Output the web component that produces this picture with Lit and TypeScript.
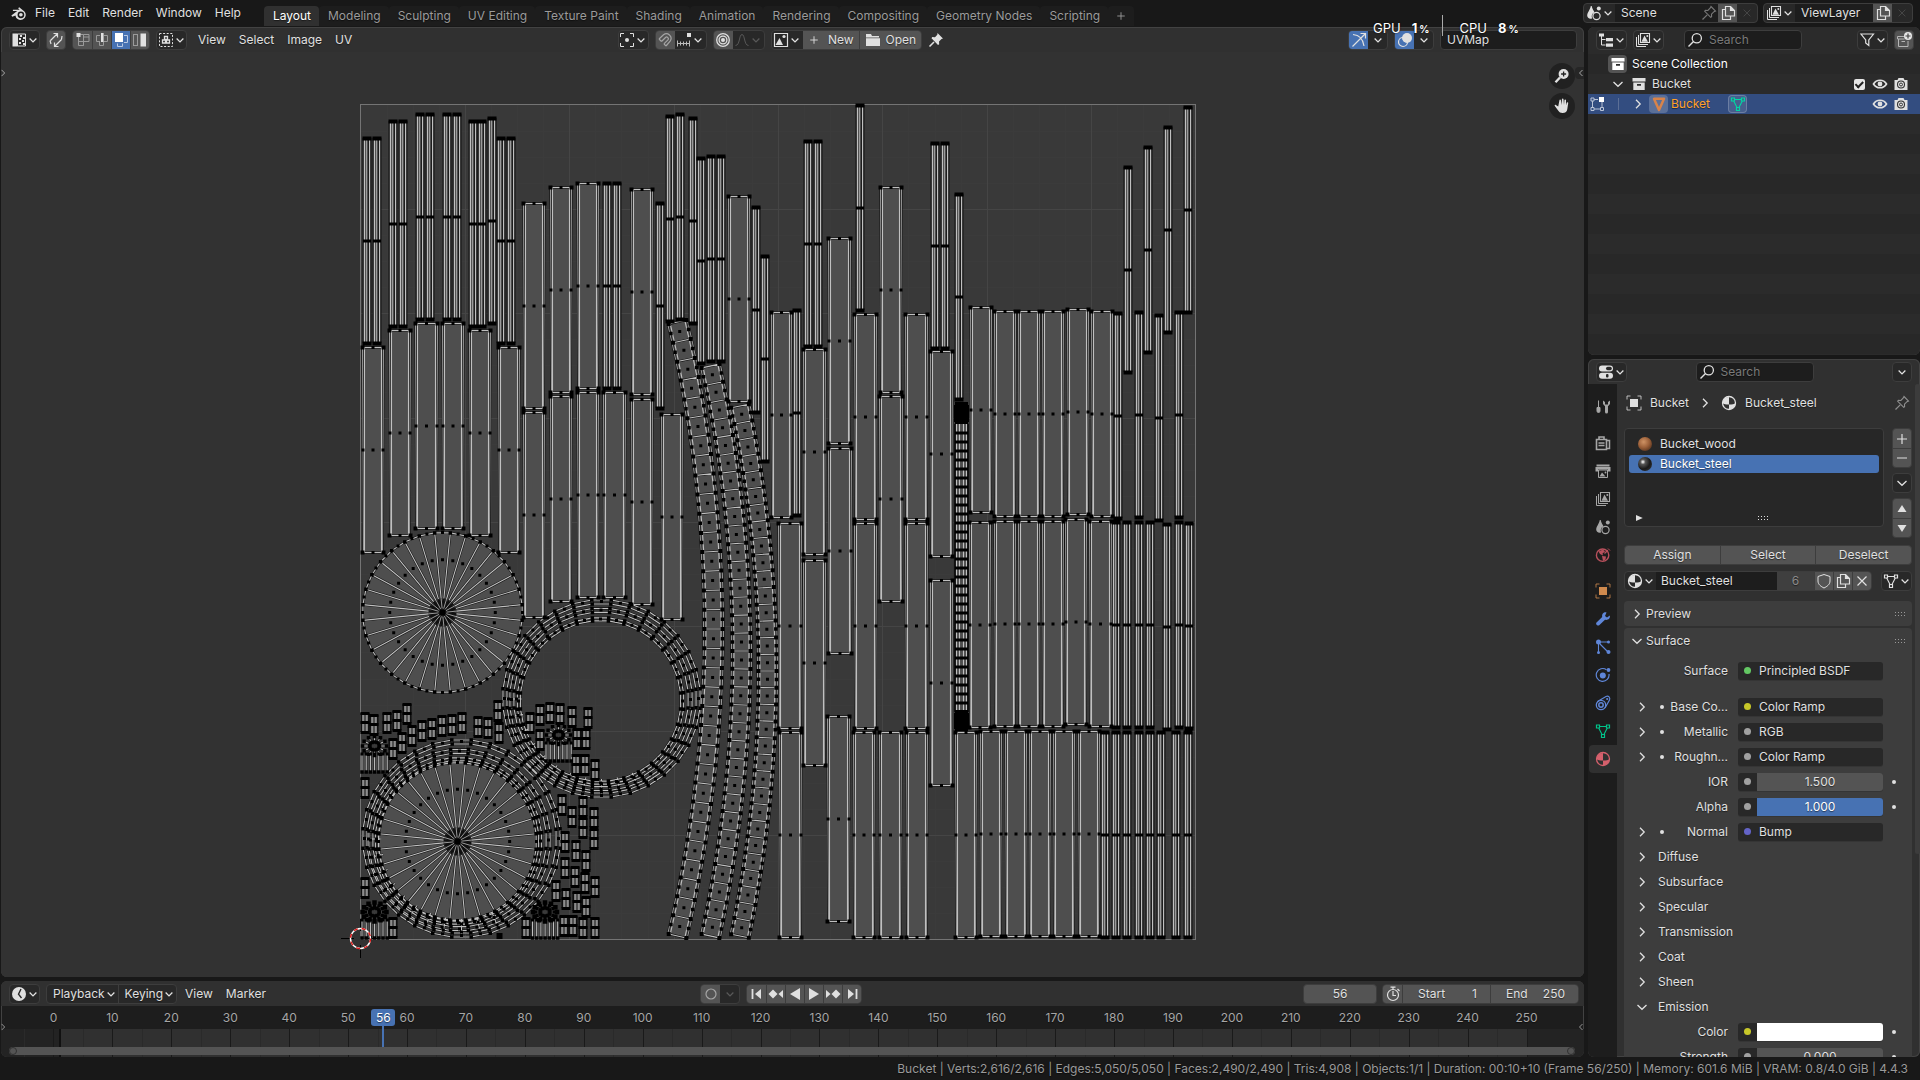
import { LitElement, html, svg, css, nothing } from "lit";
import { customElement, property } from "lit/decorators.js";

/* ---------- icons, drawn on a 16 x 16 grid ---------- */

const ICONS: Record<string, unknown> = {
  blender: svg`<path d="M1.2 10.2 6.4 6.2H2.6V5h6L7.2 3.8l1-.9 4.6 3.7a4.6 4.6 0 1 1-8 3.6L2 11.4z" fill="currentColor"/><circle cx="9.7" cy="9.6" r="3" fill="#181818"/><circle cx="9.7" cy="9.6" r="1.6" fill="currentColor"/>`,
  chevD: svg`<path d="M3.5 6 8 10.5 12.5 6" fill="none" stroke="currentColor" stroke-width="1.7"/>`,
  chevR: svg`<path d="M6 3.8 10.2 8 6 12.2" fill="none" stroke="currentColor" stroke-width="1.3"/>`,
  chevDw: svg`<path d="M3.5 6 8 10.3 12.5 6" fill="none" stroke="currentColor" stroke-width="1.3"/>`,
  chevL: svg`<path d="M10 4 6 8l4 4" fill="none" stroke="currentColor" stroke-width="1.3"/>`,
  uvedit: svg`<path d="M1.5 1.5h5v13h-5z" fill="currentColor"/><path d="M6.5 2h8v12h-8z" fill="none" stroke="currentColor"/><path d="M9 3h2v2H9zM12 5h2v2h-2zM8 6h2v2H8zM11 8h2v2h-2zM8 10h2v2H8z M12 11h2v2h-2z" fill="currentColor"/>`,
  sync: svg`<path d="M2.5 8.5 9 2M5.5 1.5h4v4M13.5 7.5 7 14M10.5 14.5h-4v-4M3 12l-1-3.5M14 4l-.5 3.5" fill="none" stroke="currentColor" stroke-width="1.2"/>`,
  vert: svg`<path d="M3.5 5v8.5h5V5H14v4.5H3.5M8.5 5V2.5H4.5M8.5 9.5v4M14 5V2.5H8.5" fill="none" stroke="#9a9a9a"/><rect x="1.5" y="1" width="4" height="4" fill="currentColor"/>`,
  edge: svg`<path d="M6 3.5H2.5v6H6M10 3.5h3.5v6H10M5.5 9.5v4h4v-4" fill="none" stroke="#9a9a9a"/><rect x="7" y="1" width="2.6" height="9" fill="currentColor"/>`,
  face: svg`<path d="M11 3.5h3.5v7H11M4.5 11.5v3h5v-3" fill="none" stroke="#b9c9e4"/><rect x="2" y="1" width="8" height="9" fill="#fff"/>`,
  island: svg`<rect x="1.5" y="2.5" width="4" height="11" fill="none" stroke="#9a9a9a"/><rect x="8.5" y="1.5" width="5.5" height="13" fill="currentColor"/>`,
  sticky: svg`<rect x="1.5" y="1.5" width="13" height="13" fill="none" stroke="currentColor" stroke-dasharray="2 1.6"/><path d="M6.5 4.5h3v3h-3zM4.5 8h3v3h-3zM8.5 8h3v3h-3z" fill="none" stroke="currentColor" stroke-width="1.3"/>`,
  pivot: svg`<path d="M1.5 5V1.5H5M11 1.5h3.5V5M14.5 11v3.5H11M5 14.5H1.5V11" fill="none" stroke="currentColor"/><circle cx="8" cy="8" r="2" fill="currentColor"/>`,
  magnet: svg`<path d="m2 7 4.5-4.2a4.6 4.6 0 0 1 6.8 6L9 14M4.5 9.5l4-4a1.7 1.7 0 0 1 2.4 2.4l-4 4M2 7l2.5 2.5M6.9 11.9 9 14" fill="none" stroke="#a5a5a5" stroke-width="1.2"/>`,
  increment: svg`<path d="M1 11.5h12.5M1.5 8.5v6M4.5 9.5v4M7.5 9.5v4M10.5 9.5v4M13.5 8.5v6" fill="none" stroke="#bbb"/><rect x="11" y="1" width="4" height="4" fill="currentColor"/>`,
  prop: svg`<circle cx="8" cy="8" r="6.3" fill="none" stroke="currentColor" stroke-width="1.3"/><circle cx="8" cy="8" r="3.9" fill="none" stroke="currentColor" stroke-width="1.3"/><circle cx="8" cy="8" r="2" fill="currentColor"/>`,
  falloff: svg`<path d="M1.5 13.5C6 13.5 5 2.5 8 2.5s2 11 6.5 11" fill="none" stroke="currentColor"/>`,
  image: svg`<path d="M5 1.5H1.5v13H5M1.5 14.5h13v-13H9" fill="none" stroke="currentColor" stroke-width="1.2"/><path d="m2.5 13 4-7 3.5 7z" fill="currentColor"/><circle cx="11" cy="4.5" r="1.6" fill="currentColor"/><path d="M4 1.5h6" stroke="currentColor"/>`,
  plus: svg`<path d="M8 3v10M3 8h10" stroke="currentColor" stroke-width="1.2"/>`,
  minus: svg`<path d="M3 8h10" stroke="currentColor" stroke-width="1.2"/>`,
  folder: svg`<path d="M1 2h5l1 2h7v1.5H1zM1 6.3h14V14H1z" fill="currentColor"/>`,
  pin: svg`<path d="m9.5 1 5.5 5.5-1.5.5-2.5 2.5.2 2.8-1.2.7L3.5 6.3l.7-1.2 2.8.2L9.3 2.8z" fill="currentColor"/><path d="M6 10 1.5 14.5" stroke="currentColor" stroke-width="1.6"/>`,
  pinOutline: svg`<path d="m10 1.5 4.5 4.5-1.5.7-2.5 2.5.1 2.5-.9.6-6-6 .7-.9 2.5.1L9.3 3z" fill="none" stroke="currentColor" stroke-width="1.1"/><path d="M6.2 9.8 1.5 14.5" stroke="currentColor" stroke-width="1.2"/>`,
  gizmo: svg`<path d="M2 2.5c7 .5 10 4 11 11.5M1.5 14.5 14 2M9.5 1.5h5v5" fill="none" stroke="currentColor" stroke-width="1.2"/>`,
  overlay: svg`<circle cx="10" cy="6" r="5" fill="currentColor"/><circle cx="6" cy="10" r="4.5" fill="none" stroke="currentColor" stroke-width="1.2"/><path d="M5 8.5a4 4 0 0 0 3 3" stroke="#4772b3" fill="none" stroke-width="1.3"/>`,
  zoom: svg`<circle cx="9.6" cy="6" r="5" fill="currentColor"/><path d="m6 9.5-4.5 4.8" stroke="currentColor" stroke-width="2.4"/><path d="M9.6 3.5v5M7.1 6h5" stroke="#222" stroke-width="1.3"/>`,
  hand: svg`<path d="M4.2 8.5 1.8 7c-.8-.5-1.5.4-1 1l3.7 5c.8 1.3 2 2 4 2 3 0 4.7-1.5 4.9-4.5l.8-5.5c.2-1-1.2-1.2-1.5-.3L12 7.5V2.3c0-1-1.5-1-1.6 0L10 7 9.5 1.3c-.1-1-1.5-1-1.6 0L7.8 7 6.9 2.2c-.2-1-1.6-.8-1.5.2z" fill="currentColor"/>`,
  scene: svg`<path d="M4.8 1C4 5 1.2 7.5 1.2 10.5c0 2 1.5 3.2 3.4 3.2l1.6-.3C5 10.5 6.5 8 8.5 7.5 7.8 5.5 6.2 4 5.7 1z" fill="currentColor"/><circle cx="10.5" cy="11" r="3.6" fill="none" stroke="currentColor" stroke-width="1.2"/><circle cx="12.8" cy="3.5" r="2" fill="currentColor"/>`,
  copy: svg`<path d="M5.5 1.5h5l4 4v5.5h-9zM10.5 1.5v4h4" fill="none" stroke="currentColor" stroke-width="1.2"/><path d="M5.5 4.5h-3v10h8v-3.5" fill="none" stroke="currentColor" stroke-width="1.2"/><path d="M10 1.5h1l3.5 4H10z" fill="currentColor"/>`,
  close: svg`<path d="m3.5 3.5 9 9m0-9-9 9" stroke="currentColor" stroke-width="1.2"/>`,
  viewlayer: svg`<path d="M1.5 5v9.5H11M3.5 3v9.5H13" fill="none" stroke="currentColor"/><path d="M5.5 1.5h9v9h-9z" fill="none" stroke="currentColor" stroke-width="1.1"/><path d="m6.5 9.8 3-6.3 3.5 6.3z" fill="currentColor"/><circle cx="12.3" cy="4" r="1" fill="currentColor"/>`,
  outliner: svg`<path d="M1 1.5h5v3H1zM8 6h7v3.2H8zM8 11.5h7v3.2H8z" fill="currentColor"/><path d="M3.5 4v9h4M3.5 7.5h4" fill="none" stroke="currentColor"/>`,
  search: svg`<circle cx="9.8" cy="6.2" r="4.6" fill="none" stroke="currentColor" stroke-width="1.3"/><path d="M6.5 9.5 1.5 14.5" stroke="currentColor" stroke-width="1.5"/>`,
  filter: svg`<path d="M2 2h12.5L9.8 8v5.5L6.7 11V8z" fill="none" stroke="currentColor" stroke-width="1.2"/>`,
  newcoll: svg`<path d="M1.5 4.5h8M2.5 7v7.5h9.5V9M1.5 4.5V7h7M5.5 9.5h3.5" fill="none" stroke="#b5b5b5"/><circle cx="12" cy="4" r="4" fill="#e6e6e6"/><path d="M12 1.5v5M9.5 4h5" stroke="#444" stroke-width="1.2"/>`,
  collection: svg`<path d="M1.5 2h13v3.5h-13zM2.3 6.5h11.4V14H2.3z" fill="currentColor"/><path d="M6 8h4v1.8H6z" fill="#2b2b2b"/>`,
  eye: svg`<path d="M1.5 8C4.5 3 11.5 3 14.5 8c-3 5-10 5-13 0z" fill="none" stroke="currentColor" stroke-width="1.7"/><circle cx="8" cy="8" r="2.4" fill="currentColor"/>`,
  camera: svg`<path d="M1.5 4h3l1-2h5l1 2h3v10h-13z" fill="currentColor"/><circle cx="8" cy="8.5" r="3.5" fill="currentColor" stroke="#333" stroke-width="1.1"/><circle cx="8" cy="8.5" r="1.5" fill="none" stroke="#333"/>`,
  editmode: svg`<path d="M3.5 5v6.5M5 13h6.5M13 6v5.5M5 3.5h4" fill="none" stroke="#b9c3d6"/><path d="M2 2h3v3H2zM2 11.5h3v3H2zM11.5 11.5h3v3h-3z" fill="none" stroke="#b9c3d6"/><rect x="10" y="1" width="5" height="5" fill="#fff"/>`,
  meshobj: svg`<path d="M3 2.8h10L8 14z" fill="none" stroke="currentColor" stroke-width="2.5" stroke-linejoin="round"/>`,
  meshdata: svg`<path d="M4 3.5h8M3.7 5 7.3 12M12.3 5 8.7 12" fill="none" stroke="currentColor" stroke-width="1.1"/><path d="M1.5 2H4.5v3h-3zM11.5 2h3v3h-3zM6.5 11.5h3v3h-3z" fill="none" stroke="currentColor" stroke-width="1.2"/>`,
  propsEd: svg`<rect x="1" y="1.5" width="14" height="6" rx="3" fill="currentColor"/><rect x="1" y="8.7" width="14" height="6" rx="3" fill="currentColor"/><rect x="8" y="2.7" width="5.8" height="3.5" rx="1.7" fill="#282828"/><rect x="8" y="9.9" width="2.5" height="3.5" rx="1" fill="#282828"/>`,
  tool: svg`<path d="M3.5 1.5v7M2 8.5h3v3.5a1.5 1.5 0 0 1-3 0z" stroke="currentColor" fill="currentColor"/><path d="M8 1.5v3.5l2 2.2V13a1.5 1.5 0 0 0 3 0V7.2L15 5V1.5L13 3v2.5h-3V3z" fill="currentColor"/>`,
  render: svg`<path d="M1.5 4.5h10v10h-10zM4 4V2h5v2" fill="none" stroke="currentColor" stroke-width="1.6"/><path d="M3.5 8h6M3.5 10.5h6M12 5.5h2.5v8H12" stroke="currentColor" fill="none" stroke-width="1.5"/>`,
  output: svg`<path d="M1.5 1.5h13v2h-13zM.5 4h15v4.5H13v-2H3v2H.5z" fill="currentColor"/><path d="M3.5 7h9v7.5h-9z" fill="none" stroke="currentColor"/><path d="m4.5 13.5 2.5-4 3.5 4z" fill="currentColor"/><circle cx="10.5" cy="9.5" r=".9" fill="currentColor"/>`,
  world: svg`<circle cx="7.6" cy="8.2" r="6.2" fill="none" stroke="currentColor" stroke-width="1.4"/><path d="M3.5 4.5 8 2.5l2 2-2.5 2 .5 2-3-1.5zM7 9l4 .5-.5 3L8 14z" fill="currentColor"/><path d="m13 1.5 2 2" stroke="currentColor"/><path d="M12.8 3.2 9.5 6.5" stroke="currentColor" stroke-width="1.3"/>`,
  object: svg`<path d="M1 4.5V1h3.5M11.5 1H15v3.5M15 11.5V15h-3.5M4.5 15H1v-3.5" fill="none" stroke="currentColor" opacity=".8"/><rect x="4" y="4" width="8" height="8" fill="currentColor"/>`,
  modifier: svg`<path d="M14.8 4.5 12 6.5 10 5l1.5-3.5C9 .8 6.5 3 7.2 6L1.5 11.5c-1.3 1.5 1 4 2.7 2.8L10 8.8c3 .7 5.5-1.5 4.8-4.3z" fill="currentColor"/>`,
  particles: svg`<circle cx="3.5" cy="3" r="2.5" fill="currentColor"/><path d="M6 3h7M3.5 5v8M5 5l8 8" stroke="currentColor" stroke-width="1.1"/><circle cx="13.5" cy="3" r="1.5" fill="currentColor"/><circle cx="3.5" cy="13.5" r="1.5" fill="currentColor"/><circle cx="13.5" cy="13" r="2" fill="currentColor"/>`,
  physics: svg`<path d="M11.5 2.8A6.4 6.4 0 1 0 14 7" fill="none" stroke="currentColor" stroke-width="1.2"/><circle cx="7.8" cy="8.5" r="3" fill="currentColor"/><circle cx="13.5" cy="3" r="1.9" fill="currentColor"/>`,
  constraint: svg`<circle cx="6" cy="10" r="4.7" fill="none" stroke="currentColor" stroke-width="1.3"/><circle cx="6" cy="10" r="2.2" fill="none" stroke="currentColor" stroke-width="1.5"/><path d="M2.5 6.5 11 1.5c2.5-1 4.5 1 3.5 3.5L10 13" fill="none" stroke="currentColor" stroke-width="1.2"/><circle cx="12.2" cy="4" r="1.1" fill="currentColor"/>`,
  material: svg`<circle cx="8" cy="8" r="6.5" fill="none" stroke="currentColor" stroke-width="1.3"/><path d="M8 2v7.5C5 9.5 2.5 9 1.5 8 1.5 5 4 2 8 2zM8 9.5c3 0 5.500-.5 6.500-1.500 0 3-2.500 6.500-6.500 6.500z" fill="currentColor"/>`,
  shield: svg`<path d="M8 1.5 14 3.5v4.5c0 3.5-3 5.5-6 7-3-1.5-6-3.5-6-7V3.5z" fill="none" stroke="currentColor"/>`,
  clock: svg`<circle cx="8" cy="8" r="7" fill="currentColor"/><path d="M10 3 7.5 8.2 10.5 12" fill="none" stroke="#282828" stroke-width="1.4"/>`,
  rec: svg`<circle cx="8" cy="8" r="5" fill="none" stroke="#a5a5a5" stroke-width="1.2"/>`,
  first: svg`<path d="M3.5 3v10" stroke="currentColor" stroke-width="1.8"/><path d="M12 3v10L6 8z" fill="currentColor"/>`,
  prevkey: svg`<path d="M5 3.5 9.5 8 5 12.5.5 8z" fill="currentColor"/><path d="M15 4v8l-4.5-4z" fill="currentColor"/>`,
  back: svg`<path d="M13 2v12L3 8z" fill="currentColor"/>`,
  play: svg`<path d="M3 2v12l10-6z" fill="currentColor"/>`,
  nextkey: svg`<path d="M11 3.5 6.5 8l4.5 4.5L15.5 8z" fill="currentColor"/><path d="M1 4v8l4.5-4z" fill="currentColor"/>`,
  last: svg`<path d="M12.5 3v10" stroke="currentColor" stroke-width="1.8"/><path d="M4 3v10l6-5z" fill="currentColor"/>`,
  stopwatch: svg`<circle cx="8" cy="9" r="5.5" fill="none" stroke="currentColor" stroke-width="1.2"/><path d="M8 5v4.5h3M5.5 1.2h5M12.5 3l2 2M8 1v2.5" fill="none" stroke="currentColor" stroke-width="1.2"/>`,
  triU: svg`<path d="m8 4 4.5 7h-9z" fill="currentColor"/>`,
  triD: svg`<path d="m8 12 4.5-7h-9z" fill="currentColor"/>`,
  triR: svg`<path d="m4 4 9 4-9 4z" fill="currentColor"/>`,
  grip: svg`<path d="M3 6.5h1M6 6.5h1M9 6.5h1M12 6.5h1M3 9.5h1M6 9.5h1M9 9.5h1M12 9.5h1" stroke="currentColor" stroke-width="1"/>`,
};

const icon = (name: string, cls = "") =>
  html`<svg class="i ${cls}" viewBox="0 0 16 16" aria-hidden="true">${ICONS[name]}</svg>`;

/* ---------- UV layout ---------- */

const H = 206;
type Pt = [number, number];

// [left, right, top] of the broad slats
const BOARDS: number[][] = [
  [362, 384, 347], [389, 411, 330], [415, 438, 323], [442, 464, 323], [469, 491, 330], [498, 520, 347],
  [523, 545, 203], [550, 572, 187], [577, 599, 183], [631, 653, 189], [728, 750, 196],
  [523, 545, 412], [550, 572, 396], [577, 599, 392], [603, 626, 392], [631, 653, 399], [661, 683, 414],
  [771, 792, 312], [803, 826, 349], [828, 851, 238], [854, 877, 314], [880, 902, 187], [905, 928, 314],
  [930, 953, 351], [970, 992, 307], [994, 1016, 311], [1018, 1040, 311], [1042, 1064, 311], [1067, 1089, 309], [1091, 1113, 311],
  [828, 852, 448], [879, 903, 396], [778, 802, 523], [854, 877, 523], [905, 928, 523],
  [969, 991, 522], [994, 1016, 521], [1018, 1040, 521], [1042, 1064, 521], [1065, 1087, 519], [1089, 1112, 521],
  [803, 826, 560], [827, 850, 716], [930, 953, 580], [779, 802, 732], [853, 875, 732], [879, 902, 732], [906, 928, 732],
  [955, 977, 732], [980, 1002, 731], [1005, 1027, 731], [1029, 1051, 731], [1053, 1075, 731], [1078, 1100, 731],
];

// [left, top] of the slim slats
const SLATS: number[][] = [
  [363, 138], [373, 138], [389, 121], [399, 121], [416, 114], [426, 114], [443, 114], [453, 114], [469, 121], [478, 121],
  [488, 118], [497, 138], [507, 138], [603, 183], [613, 183], [656, 203], [666, 116], [676, 114], [689, 118],
  [697, 158], [707, 156], [717, 156], [752, 207], [761, 256],
  [793, 310], [804, 141], [814, 141], [856, 105], [931, 143], [941, 143], [955, 194],
  [1124, 167], [1144, 147], [1164, 127], [1184, 107], [1114, 313], [1135, 312], [1155, 315], [1175, 312],
  [1112, 522], [1123, 522], [1135, 522], [1146, 522], [1163, 524], [1175, 522], [1185, 523],
  [1101, 732], [1112, 732], [1123, 732], [1135, 732], [1146, 732], [1157, 732], [1172, 732], [1184, 732],
];

// [left, top] of the small rivet pieces, in thirds of a unit
const TILES: number[][] = [
  [62, 580], [91, 584], [128, 580], [158, 572], [188, 551], [234, 604], [264, 597], [295, 588], [325, 584], [355, 580],
  [401, 592], [431, 595], [461, 542], [465, 610], [205, 618], [174, 640], [146, 656], [62, 775], [62, 1075],
  [558, 580], [587, 555], [619, 548], [649, 551], [685, 562], [732, 565], [587, 630], [698, 628], [726, 628],
  [695, 706], [722, 706], [752, 720], [655, 825], [685, 862], [718, 832], [716, 895], [749, 865], [749, 928],
  [663, 937], [695, 962], [725, 992], [663, 1015], [692, 1040], [722, 1058], [752, 1070], [636, 1082], [665, 1108],
  [698, 1117], [727, 1132], [148, 1195], [546, 1195], [660, 1187], [687, 1187], [718, 1195], [752, 1195],
];

let fills = "", halo = "", thin = "", bright = "", dim = "", dots = "";
const n = (v: number) => Math.round(v * 100) / 100;
const seg = (a: Pt, b: Pt) => `M${n(a[0])} ${n(a[1])}L${n(b[0])} ${n(b[1])}`;
const dot = (x: number, y: number, s = 3) => {
  dots += `M${n(x - s / 2)} ${n(y - s / 2)}h${s}v${s}h${-s}z`;
};
const bar = (x: number, y: number, w: number, h: number) => {
  dots += `M${n(x)} ${n(y)}h${w}v${h}h${-w}z`;
};
const edge = (a: Pt, b: Pt, light = true) => {
  const s = seg(a, b);
  halo += s;
  if (light) bright += s;
  else dim += s;
};

for (const [l, r, t] of BOARDS) {
  const b = t + H - 1;
  fills += `M${l} ${t}H${r}L${r - 1} ${b}H${l + 1}z`;
  edge([l + 0.5, t], [l + 1.5, b], false);
  edge([r - 0.5, t], [r - 1.5, b], false);
  bright += seg([l + 2.5, t], [l + 2.5, b]) + seg([r - 2.5, t], [r - 2.5, b]);
  edge([l, t + 0.5], [r, t + 0.5]);
  edge([l + 1, b + 0.5], [r - 1, b + 0.5]);
  const m = (l + r) / 2;
  for (const y of [t + 0.5, b + 0.5]) {
    dot(l + 0.5, y, 4);
    dot(m, y);
    dot(r - 0.5, y, 4);
  }
  dot(l + 1, t + H / 2);
  dot(m, t + H / 2);
  dot(r - 1, t + H / 2);
}

for (const [l, t] of SLATS) {
  const b = t + H - 1;
  fills += `M${l} ${t}h8V${b}h-8z`;
  thin += seg([l, t], [l, b]) + seg([l + 8, t], [l + 8, b]) + seg([l + 5.5, t], [l + 5.5, b]);
  bright += seg([l + 1.5, t], [l + 1.5, b]) + seg([l + 6.5, t], [l + 6.5, b]);
  dim += seg([l + 3.5, t], [l + 3.5, b]);
  bar(l - 0.5, t - 1.5, 9, 4);
  bar(l, t + H / 2 - 1.5, 8, 3);
  bar(l - 0.5, b - 1.5, 9, 4);
}

// hoops unrolled into arcs: rightmost x, top, bottom, sagitta
for (const [x, top, bottom, sag] of [[713.5, 322, 936, 36], [741.5, 366, 936, 31], [767.5, 406, 936, 27.5]]) {
  const half = (bottom - top) / 2;
  const R = (half * half + sag * sag) / (2 * sag);
  const cy = (top + bottom) / 2;
  const cx = x - R;
  const A = Math.asin(half / R);
  const N = 32;
  const at = (i: number, o: number): Pt => {
    const a = -A + (2 * A * i) / N;
    return [cx + (R + o) * Math.cos(a), cy + (R + o) * Math.sin(a)];
  };
  for (let i = 0; i < N; i++) {
    const q = [at(i, -10), at(i, 10), at(i + 1, 10), at(i + 1, -10)];
    fills += "M" + q.map((p) => `${n(p[0])} ${n(p[1])}`).join("L") + "z";
    edge(q[0], q[1]);
    edge(q[1], q[2], false);
    edge(q[3], q[0], false);
    bright += seg(at(i, -7.5), at(i + 1, -7.5)) + seg(at(i, 7.5), at(i + 1, 7.5));
    dot(...at(i + 0.5, 0));
    for (const o of [-9, 9]) {
      dot(...at(i, o), 4);
      dot(...at(i + 0.5, o), 3.5);
    }
  }
  edge(at(N, -10), at(N, 10));
  dot(...at(N, -9), 4);
  dot(...at(N, 9), 4);
}

const around = (cx: number, cy: number, r: number, k: number): Pt => {
  const a = (Math.PI * 2 * k) / 32 - Math.PI / 2;
  return [cx + r * Math.cos(a), cy + r * Math.sin(a)];
};

for (const [cx, cy, r] of [[442.5, 612.5, 80], [457.5, 841.5, 79]]) {
  let disc = "";
  for (let k = 0; k < 32; k++) {
    const p = around(cx, cy, r, k + 0.5);
    const q = around(cx, cy, r, k + 1.5);
    disc += (k ? "L" : "M") + `${n(p[0])} ${n(p[1])}`;
    edge(p, q);
    halo += seg([cx, cy], p);
    bright += seg(around(cx, cy, 14, k + 0.5), p);
    if (k % 2) dim += seg(around(cx, cy, 4, k + 0.5), around(cx, cy, 14, k + 0.5));
    dot(...p, 3.5);
    dot(...around(cx, cy, r, k + 1));
    dot(...around(cx, cy, r * 0.66, k));
  }
  fills += disc + "z";
  dot(cx, cy, 5);
}

for (const [cx, cy, r, w] of [
  [461.5, 838.5, 97, 4], [459.5, 840, 89, 4], [458.5, 841, 82, 3],
  [601.5, 698.5, 97, 4], [601, 699.5, 89.5, 4], [600.5, 701, 82, 3],
]) {
  for (let k = 0; k < 32; k++) {
    for (const o of [-w / 2, w / 2]) edge(around(cx, cy, r + o, k + 0.5), around(cx, cy, r + o, k + 1.5));
    edge(around(cx, cy, r - w / 2, k + 0.5), around(cx, cy, r + w / 2, k + 0.5));
    dot(...around(cx, cy, r - w / 2, k + 0.5), 3.5);
    dot(...around(cx, cy, r + w / 2, k + 0.5), 3.5);
    dot(...around(cx, cy, r, k + 1), 3);
  }
}
// crowded lower-left quarter of both hoop sets, where the strips overlap
for (const [cx, cy] of [[461.5, 839], [601.5, 699]]) {
  for (let k = 14; k < 25; k++) {
    edge(around(cx, cy, 80, k), around(cx, cy, 97, k), true);
    for (const r of [85, 93]) dot(...around(cx, cy, r, k), 3);
  }
}

for (const [tx, ty] of TILES) {
  const x = Math.round(340 + tx / 3);
  const y = Math.round(520 + ty / 3);
  fills += `M${x} ${y}h8v19h-8z`;
  halo += seg([x + 0.5, y], [x + 0.5, y + 19]) + seg([x + 7.5, y], [x + 7.5, y + 19]);
  bright += seg([x + 2, y], [x + 2, y + 19]) + seg([x + 6, y], [x + 6, y + 19]);
  for (const o of [-1, 8, 18]) bar(x - 0.5, y + o, 9, 3);
}

// ears: toothed disc over a comb of short slats
for (const [cx, cy, comb, heavy] of [[374.5, 746, 754, 0], [558.5, 735, 743, 0], [374.5, 912, 920, 1], [545, 912, 920, 1]]) {
  fills += `M${cx - 13} ${comb}h26v18h-26z`;
  for (let k = 0; k <= 6; k++) {
    const x = cx - 12.5 + k * 4.2;
    edge([x, comb], [x, comb + 18]);
    dot(x, comb, 3);
    dot(x, comb + 18, 3.5);
  }
  for (let k = 0; k < 12; k++) {
    const a = (k / 12) * Math.PI * 2;
    const p = (r: number): Pt => [cx + r * Math.cos(a), cy + r * 0.8 * Math.sin(a)];
    edge(p(4), p(12), !heavy);
    dot(...p(12), heavy ? 4.5 : 3.5);
    dot(...p(5), 3.5);
    if (heavy) dot(...p(9), 3);
  }
}
dot(499.5, 936, 6);

// handle strip with a dense pad at each end
fills += "M955 420h13v296h-13z";
for (const x of [955, 968]) halo += seg([x, 424], [x, 712]);
for (const x of [956.5, 959.5, 963.5, 966.5]) bright += seg([x, 424], [x, 712]);
for (let y = 433; y < 706; y += 9) bar(955, y - 1.5, 13, 3);
bar(955, 402, 13, 22);
bar(954, 405, 15, 17);
bar(955, 710, 13, 21);
bar(954, 713, 15, 16);

const F = { x: 360.5, y: 104.5, s: 835 };
const grid = (step: number) => {
  let d = "";
  for (let k = 1; k < 64; k++) {
    if (k % step || (step === 2 && k % 8 === 0)) continue;
    const v = (F.s * k) / 64;
    d += `M${Math.round(F.x + v)}.5 ${F.y}v${F.s}M${F.x} ${Math.round(F.y + v)}.5h${F.s}`;
  }
  return d;
};

@customElement("uv-canvas")
export class UvCanvas extends LitElement {
  static styles = css`
    :host { display: block; overflow: hidden; background: #323232; }
    svg { display: block; width: 100%; height: 100%; }
    .frame { fill: #393939; }
    .outline { fill: none; stroke: #747474; }
    .minor { stroke: #3b3b3b; fill: none; }
    .major { stroke: #454545; fill: none; }
    .fills { fill: #4e4e4e; }
    .halo { stroke: #101010; stroke-width: 2.2; fill: none; }
    .thin { stroke: #151515; stroke-width: 1; fill: none; }
    .dim { stroke: #9a9a9a; fill: none; }
    .bright { stroke: #c0c0c0; stroke-width: 1.1; fill: none; }
    .dots { fill: #000; }
    .ring { fill: none; stroke: #fff; stroke-width: 1.4; }
    .dash { fill: none; stroke: #e01818; stroke-width: 1.4; stroke-dasharray: 4 4; }
    .cross { stroke: #000; }
  `;
  render() {
    return html`<svg role="img" aria-label="UV layout of Bucket">
      <g transform="translate(-1 -52)">
        <rect class="frame" x=${F.x} y=${F.y} width=${F.s} height=${F.s}></rect>
        <path class="minor" d=${grid(2)}></path>
        <path class="major" d=${grid(8)}></path>
        <rect class="outline" x=${F.x} y=${F.y} width=${F.s} height=${F.s}></rect>
        <path class="fills" d=${fills}></path>
        <path class="halo" d=${halo}></path>
        <path class="thin" d=${thin}></path>
        <path class="dim" d=${dim}></path>
        <path class="bright" d=${bright}></path>
        <path class="dots" d=${dots}></path>
        <path class="cross" d="M341 938.5h13M367 938.5h13M360.5 919v12M360.5 945v13"></path>
        <circle class="ring" cx="360.5" cy="938.5" r="10"></circle>
        <circle class="dash" cx="360.5" cy="938.5" r="10"></circle>
      </g>
    </svg>`;
  }
}

/* ---------- shared look ---------- */

const base = css`
  * { box-sizing: border-box; }
  button, input, select {
    font: inherit; color: inherit; margin: 0; padding: 0; border: 0; background: none; min-width: 0;
    text-shadow: inherit; outline: 0;
  }
  button { display: flex; align-items: center; justify-content: center; white-space: nowrap; }
  .i { width: 16px; height: 16px; flex: none; display: block; }
  .i.s { width: 12px; height: 12px; }
  .box {
    display: flex; align-items: center; justify-content: center; height: 20px; border-radius: 4px;
    border: 1px solid #3d3d3d; background: #282828; flex: none;
  }
  .drop { width: 31px; }
  .group { display: flex; height: 20px; border: 1px solid #3d3d3d; border-radius: 4px; overflow: hidden; flex: none; background: #282828; }
  .group > .on { background: #545454; }
  .group > .blue { background: #4772b3; }
  .group > .cell { width: 19px; }
  .group > .wide { width: 31px; }
  .group > * + .sep { border-left: 1px solid #3d3d3d; }
  .menu { padding: 0 6px 0 7px; height: 20px; }
  .search {
    display: flex; align-items: center; height: 20px; width: 118px; border: 1px solid #3d3d3d; border-radius: 4px;
    background: #1d1d1d; padding: 0 2px; gap: 6px; flex: none;
  }
  .search input { flex: 1; }
  .search input::placeholder { color: #7a7a7a; opacity: 1; }
  .faint { color: #585858; }
`;

const drop = (name: string, label: string) =>
  html`<button class="box drop" aria-label=${label} aria-haspopup="menu">${icon(name)}${icon("chevD", "s")}</button>`;

/* ---------- timeline ---------- */

@customElement("time-line")
export class TimeLine extends LitElement {
  @property({ type: Number }) frame = 56;
  static styles = [base, css`
    :host { display: flex; flex-direction: column; position: relative; background: #1d1d1d; }
    .head { display: grid; grid-template-columns: 1fr auto 1fr; height: 25px; align-items: center; background: #303030; padding: 0 5px 0 8px; flex: none; }
    .left, .mid, .right { display: flex; align-items: center; }
    .left { gap: 6px; }
    .mid { padding-right: 26px; gap: 6px; }
    .right { justify-content: flex-end; gap: 5px; }
    .pop { padding: 0 1px 0 6px; }
    .menus { display: flex; margin-left: -5px; }
    .current { width: 74px; text-align: center; background: #545454; border: 1px solid #3d3d3d; border-radius: 4px; height: 20px; }
    .range { display: flex; align-items: center; width: 88px; background: #545454; padding: 0 13px 0 15px; }
    .range span { flex: 1; }
    .range input { width: 30px; text-align: right; }
    .ruler { display: flex; height: 23px; padding: 0 28px 0 23px; align-items: center; color: #a6a6a6; flex: none; }
    .ruler span { flex: 1; text-align: center; }
    .track { flex: 1; display: flex; padding: 0 28px 0 23px; background: #232323; }
    .cells { flex: 1; display: flex; position: relative; background: linear-gradient(90deg, #232323 2.31%, #111 2.31% 2.41%, #303030 2.41% 98.08%, #232323 98.08%); }
    .cells span { flex: 1; border-left: 1px solid #2a2a2a; background: linear-gradient(#1a1a1a, #1a1a1a) center / 1px 100% no-repeat; }
    .head-mark { position: absolute; top: -20px; bottom: 0; width: 24px; margin-left: -12px; color: #fff; text-align: center; }
    .head-mark b { display: block; font-weight: 400; height: 17px; line-height: 17px; border-radius: 3px; background: #4772b3; }
    .head-mark i { display: block; width: 2px; margin: 0 auto; height: 29px; background: #4772b3; }
    .scroll { position: absolute; left: 8px; right: 9px; bottom: 2px; height: 8px; border-radius: 4px; background: #545454; display: flex; justify-content: space-between; }
    .scroll span { width: 8px; border: 1px solid #303030; border-radius: 4px; }
    .toggle { position: absolute; color: #999; top: 40px; }
    .toggle.l { left: -4px; }
    .toggle.r { right: -3px; }
  `];
  render() {
    const marks = Array.from({ length: 26 }, (_, i) => i * 10);
    return html`
      <div class="head">
        <div class="left">
          ${drop("clock", "Editor type")}
          <div class="group">
            <button class="pop">Playback ${icon("chevD", "s")}</button>
            <button class="pop sep">Keying ${icon("chevD", "s")}</button>
          </div>
          <div class="menus"><button class="menu">View</button><button class="menu">Marker</button></div>
        </div>
        <div class="mid">
          <div class="group">
            <button class="cell on" aria-label="Auto keying">${icon("rec")}</button>
            <button class="cell faint" aria-label="Auto keying options">${icon("chevD", "s")}</button>
          </div>
          <div class="group">
            ${["first", "prevkey", "back", "play", "nextkey", "last"].map(
              (k, i) => html`<button class="cell on ${i ? "sep" : ""}" aria-label=${k}>${icon(k)}</button>`)}
          </div>
        </div>
        <div class="right">
          <input class="current" aria-label="Current frame" .value=${String(this.frame)} />
          <div class="group">
            <button class="cell on" aria-label="Use preview range">${icon("stopwatch")}</button>
            <label class="range sep"><span>Start</span><input value="1" /></label>
            <label class="range sep"><span>End</span><input value="250" /></label>
          </div>
        </div>
      </div>
      <div class="ruler">${marks.map((m) => html`<span>${m}</span>`)}</div>
      <div class="track">
        <div class="cells">
          ${marks.map(() => html`<span></span>`)}
          <div class="head-mark" style="left:${((this.frame + 5) / 260) * 100}%"><b>${this.frame}</b><i></i></div>
        </div>
      </div>
      <div class="scroll"><span></span><span></span></div>
      <div class="toggle l">${icon("chevR", "s")}</div>
      <div class="toggle r">${icon("chevL", "s")}</div>`;
  }
}

/* ---------- properties ---------- */

type Row = { label: string; open?: boolean; dot: string; text?: string; value?: string; look?: string };

const ROWS: Row[] = [
  { label: "Base Co...", open: true, dot: "#c7c729", text: "Color Ramp" },
  { label: "Metallic", open: true, dot: "#a1a1a1", text: "RGB" },
  { label: "Roughn...", open: true, dot: "#a1a1a1", text: "Color Ramp" },
  { label: "IOR", dot: "#a1a1a1", value: "1.500" },
  { label: "Alpha", dot: "#a1a1a1", value: "1.000", look: "full" },
  { label: "Normal", open: true, dot: "#6363c7", text: "Bump" },
];

const TABS: [string, string, string][][] = [
  [["tool", "#a6a6a6", "Tool"]],
  [["render", "#a6a6a6", "Render"], ["output", "#a6a6a6", "Output"], ["viewlayer", "#a6a6a6", "View Layer"], ["scene", "#a6a6a6", "Scene"], ["world", "#b8505c", "World"]],
  [["object", "#d08a4e", "Object"], ["modifier", "#5f86d8", "Modifiers"], ["particles", "#5f86d8", "Particles"], ["physics", "#5f86d8", "Physics"],
   ["constraint", "#5f86d8", "Constraints"], ["meshdata", "#00c48a", "Data"], ["material", "#d5606c", "Material"]],
];

@customElement("material-properties")
export class MaterialProperties extends LitElement {
  static styles = [base, css`
    :host { display: flex; flex-direction: column; background: #303030; overflow: hidden; }
    .head { display: flex; align-items: center; justify-content: space-between; height: 25px; padding: 0 8px; flex: none; }
    .head .search { margin-right: 10px; }
    .sq { width: 20px; }
    .body { display: flex; flex: 1; min-height: 0; }
    nav { width: 29px; background: #1d1d1d; padding: 9px 0 0 1px; flex: none; display: flex; flex-direction: column; gap: 8px; }
    nav button { width: 28px; height: 28px; border-radius: 4px 0 0 4px; }
    nav .sel { background: #303030; }
    .main { flex: 1; min-width: 0; padding: 6px 3px 0 7px; display: flex; flex-direction: column; overflow: hidden; }
    .bar { width: 5px; flex: none; }
    .bar div { height: 470px; border-radius: 3px; background: #3c3c3c; }
    .crumb { display: flex; align-items: center; height: 26px; padding: 0 2px; gap: 8px; flex: none; }
    .crumb .end { margin-left: auto; color: #8f8f8f; }
    .slots { display: flex; gap: 8px; margin-top: 12px; flex: none; }
    .list { flex: 1; height: 99px; border: 1px solid #3d3d3d; border-radius: 4px; background: #272727; padding: 6px 4px 0; display: flex; flex-direction: column; }
    .slot { display: flex; align-items: center; justify-content: flex-start; gap: 8px; height: 18px; padding: 0 9px; border-radius: 3px; margin-bottom: 2px; width: 100%; }
    .slot.sel { background: #4772b3; color: #fff; }
    .ball { width: 14px; height: 14px; border-radius: 50%; background: radial-gradient(circle at 40% 35%, #c98d60 5%, #9c6039 45%, #3f2414 95%); }
    .sel .ball { background: radial-gradient(circle at 35% 35%, #ddd 5%, #555 20%, #191919 55%, #3a3a3a 95%); }
    .foot { display: flex; margin: auto 0 1px 4px; height: 14px; align-items: center; }
    .foot .mid { margin: 0 auto; padding-left: 2px; }
    .side { display: flex; flex-direction: column; gap: 5px; width: 20px; }
    .stack { display: flex; flex-direction: column; border: 1px solid #3d3d3d; border-radius: 4px; background: #545454; }
    .stack button { height: 19px; }
    .stack button + button { border-top: 1px solid #3d3d3d; }
    .trio { margin-top: 7px; display: flex; border: 1px solid #3d3d3d; border-radius: 4px; overflow: hidden; height: 20px; background: #545454; flex: none; }
    .trio button { flex: 1; }
    .trio button + button { border-left: 1px solid #3d3d3d; }
    .data { margin-top: 6px; display: flex; gap: 9px; flex: none; }
    .data .group { flex: 1; }
    .data .name { flex: 1; background: #1d1d1d; padding-left: 5px; }
    .data .users { width: 37px; background: #3f3f3f; color: #8a8a8a; }
    .panel { background: #3d3d3d; border-radius: 4px; flex: none; }
    .panel.first { margin: 10px 0 2px; }
    .title { display: flex; align-items: center; width: 100%; height: 25px; padding: 0 4px 0 5px; gap: 1px; }
    .title .grip { margin-left: auto; color: #999; }
    .row { display: flex; align-items: center; height: 25px; padding-right: 10px; }
    .row.shader { margin: 5px 0 11px; }
    .lead { display: flex; align-items: center; width: 46px; padding-left: 10px; gap: 10px; flex: none; }
    .pt { width: 4px; height: 4px; border-radius: 50%; background: #e0e0e0; flex: none; display: block; }
    .lab { width: 58px; text-align: right; flex: none; }
    .field { display: flex; flex: 1; height: 18px; margin-left: 10px; border-radius: 3px; background: #282828; overflow: hidden; align-items: center; box-shadow: 0 1px #353535; }
    .sock { width: 19px; display: flex; justify-content: center; flex: none; }
    .sock i { width: 7px; height: 7px; border-radius: 50%; }
    .field button { flex: 1; justify-content: flex-start; padding-left: 2px; }
    .field input { flex: 1; width: 0; height: 18px; text-align: center; background: #545454; }
    .field input.full { background: #4772b3; color: #fff; }
    .field input[type="color"] { background: #fff; appearance: none; }
    .field input::-webkit-color-swatch-wrapper { padding: 0; }
    .field input::-webkit-color-swatch { border: 0; }
    .tail { width: 19px; padding-left: 9px; flex: none; }
    .sub { display: flex; justify-content: flex-start; height: 25px; width: 100%; padding-left: 10px; gap: 8px; }
  `];

  private row(r: Row, cls = "") {
    return html`<div class="row ${cls}">
      <span class="lead">${r.open ? html`${icon("chevR")}<span class="pt"></span>` : nothing}</span>
      <label class="lab" for=${"f-" + r.label}>${r.label}</label>
      <div class="field">
        <span class="sock"><i style="background:${r.dot}"></i></span>
        ${r.text
          ? html`<button id=${"f-" + r.label}>${r.text}</button>`
          : r.look === "color"
            ? html`<input id=${"f-" + r.label} type="color" value="#ffffff" />`
            : html`<input id=${"f-" + r.label} class=${r.look ?? ""} value=${r.value ?? ""} />`}
      </div>
      <span class="tail">${r.text ? nothing : html`<span class="pt"></span>`}</span>
    </div>`;
  }

  render() {
    return html`
      <div class="head">
        ${drop("propsEd", "Editor type")}
        <label class="search">${icon("search")}<input placeholder="Search" aria-label="Search properties" /></label>
        <button class="box sq" aria-label="Options">${icon("chevD", "s")}</button>
      </div>
      <div class="body">
        <nav>
          ${TABS.map((g) => html`<div>${g.map(([k, c, l]) => html`<button class=${k === "material" ? "sel" : ""} style="color:${c}" aria-label=${l}>${icon(k)}</button>`)}</div>`)}
        </nav>
        <div class="main">
          <div class="crumb">
            ${icon("object")}<span>Bucket</span>
            ${icon("chevR")}${icon("material")}<span>Bucket_steel</span>
            <span class="end">${icon("pinOutline")}</span>
          </div>
          <div class="slots">
            <div class="list">
              <button class="slot"><span class="ball"></span>Bucket_wood</button>
              <button class="slot sel"><span class="ball"></span>Bucket_steel</button>
              <div class="foot">${icon("triR", "s")}<span class="mid">${icon("grip")}</span></div>
            </div>
            <div class="side">
              <div class="stack">
                <button aria-label="Add slot">${icon("plus")}</button>
                <button aria-label="Remove slot">${icon("minus")}</button>
              </div>
              <button class="box sq" aria-label="Slot specials">${icon("chevDw")}</button>
              <div class="stack">
                <button aria-label="Move up">${icon("triU")}</button>
                <button aria-label="Move down">${icon("triD")}</button>
              </div>
            </div>
          </div>
          <div class="trio"><button>Assign</button><button>Select</button><button>Deselect</button></div>
          <div class="data">
            <div class="group">
              <button class="wide" aria-label="Browse material">${icon("material")}${icon("chevD", "s")}</button>
              <input class="name" aria-label="Material name" value="Bucket_steel" />
              <button class="users">6</button>
              <button class="cell on sep" aria-label="Fake user">${icon("shield")}</button>
              <button class="cell on sep" aria-label="New material">${icon("copy")}</button>
              <button class="cell on sep" aria-label="Unlink">${icon("close")}</button>
            </div>
            ${drop("meshdata", "Link")}
          </div>
          <div class="panel first"><button class="title">${icon("chevR")}Preview<span class="grip">${icon("grip")}</span></button></div>
          <div class="panel">
            <button class="title">${icon("chevDw")}Surface<span class="grip">${icon("grip")}</span></button>
            ${this.row({ label: "Surface", dot: "#63c763", text: "Principled BSDF" }, "shader")}
            ${ROWS.map((r) => this.row(r))}
            ${["Diffuse", "Subsurface", "Specular", "Transmission", "Coat", "Sheen"].map((t) => html`<button class="sub">${icon("chevR")}${t}</button>`)}
            <button class="sub">${icon("chevDw")}Emission</button>
            ${this.row({ label: "Color", dot: "#c7c729", look: "color" })}
            ${this.row({ label: "Strength", dot: "#a1a1a1", value: "0.000" })}
          </div>
        </div>
        <div class="bar"><div></div></div>
      </div>`;
  }
}

/* ---------- outliner ---------- */

@customElement("scene-outliner")
export class SceneOutliner extends LitElement {
  static styles = [base, css`
    :host { display: flex; flex-direction: column; background: #282828; overflow: hidden; }
    .head { display: flex; align-items: center; height: 27px; padding: 0 6px 2px 8px; background: #2b2b2b; gap: 6px; flex: none; }
    .search { margin-left: 14px; }
    .filter { margin-left: auto; }
    .new { width: 20px; background: #545454; }
    .rows { flex: 1; background: repeating-linear-gradient(#282828 0 20px, #2b2b2b 20px 40px); }
    .row { display: flex; align-items: center; height: 20px; gap: 5px; padding: 0 11px 0 20px; }
    .tile { width: 19px; height: 18px; border-radius: 4px; background: #545454; display: flex; align-items: center; justify-content: center; }
    .title { color: #fff; }
    .coll { padding-left: 22px; }
    .end { margin-left: auto; display: flex; gap: 5px; align-items: center; color: #e0e0e0; }
    .sel { background: #334d80; padding-left: 1px; gap: 3px; }
    .sel .guide { width: 1px; height: 12px; background: #5c6f96; margin: 0 8px 0 10px; }
    .sel .tile { background: rgba(255, 255, 255, 0.2); }
    .orange { color: #ffa028; }
    .sel .obj { color: #d8834a; }
    .sel .mesh { color: #00d6a3; margin-left: 15px; border: 1px solid rgba(255, 255, 255, 0.2); background: rgba(255, 255, 255, 0.1); }
    input[type="checkbox"] { appearance: none; width: 11px; height: 11px; border-radius: 2px; background: #e6e6e6; margin-right: 2px; display: grid; place-items: center; }
    input[type="checkbox"]::before { content: ""; width: 6px; height: 3px; border: solid #222; border-width: 0 0 2px 2px; transform: rotate(-45deg) translate(0, -1px); box-sizing: content-box; }
  `];
  render() {
    const vis = html`<button aria-label="Hide in viewport">${icon("eye")}</button><button aria-label="Disable in renders">${icon("camera")}</button>`;
    return html`
      <div class="head">
        ${drop("outliner", "Editor type")}${drop("viewlayer", "Display mode")}
        <label class="search">${icon("search")}<input placeholder="Search" aria-label="Search outliner" /></label>
        <button class="box drop filter" aria-label="Filter">${icon("filter")}${icon("chevD", "s")}</button>
        <button class="box new" aria-label="New collection">${icon("newcoll")}</button>
      </div>
      <div class="rows">
        <div class="row title"><span class="tile">${icon("collection")}</span>Scene Collection</div>
        <div class="row coll">
          ${icon("chevDw")}${icon("collection")}Bucket
          <span class="end"><input type="checkbox" checked aria-label="Include Bucket in view layer" />${vis}</span>
        </div>
        <div class="row sel">
          ${icon("editmode")}<span class="guide"></span>${icon("chevR")}
          <span class="tile obj">${icon("meshobj")}</span><span class="orange">Bucket</span>
          <span class="tile mesh">${icon("meshdata")}</span>
          <span class="end">${vis}</span>
        </div>
      </div>`;
  }
}

/* ---------- application ---------- */

const WORKSPACES = ["Layout", "Modeling", "Sculpting", "UV Editing", "Texture Paint", "Shading", "Animation", "Rendering", "Compositing", "Geometry Nodes", "Scripting"];

@customElement("app-root")
export class AppRoot extends LitElement {
  static styles = [base, css`
    :host {
      display: grid; grid-template-rows: 27px minmax(0, 1fr) 23px; height: 100vh; overflow: hidden; position: relative;
      background: #181818; color: #e0e0e0; font: 12px/16px Inter, "Noto Sans", sans-serif; text-shadow: 0 1px 1px rgba(0, 0, 0, 0.5);
    }
    .top { display: flex; padding: 0 7px 0 10px; min-width: 0; }
    .logo { margin-top: 4px; color: #ddd; width: 18px; height: 18px; }
    .menus { display: flex; margin-top: 3px; }
    .tabs { display: flex; margin: 6px 0 0 17px; height: 20px; }
    .tabs button { padding: 0 8px 0 9px; color: #9b9b9b; background: #1d1d1d; border-radius: 4px 4px 0 0; }
    .tabs .sel { background: #303030; color: #fff; }
    .tabs .add { padding: 0 7px; }
    .ids { display: flex; gap: 5px; margin: 3px 0 0 auto; }
    .ids .name { background: #1d1d1d; padding-left: 6px; }
    .ids .scene { width: 85px; }
    .ids .layer { width: 78px; }
    .ids .group > .pinned { width: 18px; background: #1d1d1d; color: #777; }
    .ids .off { width: 20px; color: #484848; }
    .work { display: grid; grid-template-columns: minmax(0, 1fr) 332px; gap: 4px; padding: 0 0 0 1px; min-height: 0; }
    .col { display: flex; flex-direction: column; gap: 4px; min-height: 0; min-width: 0; }
    .editor { border-radius: 6px; overflow: hidden; box-shadow: inset 0 0 0 1px #424242; }
    .uv { flex: 1; display: flex; flex-direction: column; background: #303030; position: relative; min-height: 0; }
    .uvhead { display: grid; grid-template-columns: 1fr auto 1fr; height: 25px; padding: 2px 7px 1px 8px; align-items: center; flex: none; }
    .l, .m, .r { display: flex; align-items: center; gap: 6px; }
    .m { padding-right: 24px; }
    .r { justify-content: flex-end; }
    .hm { display: flex; margin-left: -2px; }
    .sync { width: 20px; background: #545454; }
    .act { gap: 8px; padding: 0 5px; }
    .open { gap: 5px; }
    .map { width: 137px; justify-content: flex-start; padding: 0 6px; background: #1d1d1d; appearance: none; }
    uv-canvas { flex: 1; min-height: 0; }
    .nav { position: absolute; right: 9px; top: 36px; display: flex; flex-direction: column; gap: 4px; }
    .nav button { width: 26px; height: 26px; border-radius: 50%; background: #212121; }
    .tog { position: absolute; top: 40px; color: #aaa; }
    .tog.a { left: -4px; }
    .tog.b { right: -3px; background: #262626; border-radius: 4px 0 0 4px; }
    time-line { height: 76px; flex: none; }
    scene-outliner { flex: 328 1 0; min-height: 0; }
    material-properties { flex: 697 1 0; min-height: 0; }
    .status { display: flex; align-items: center; justify-content: flex-end; padding: 0 12px; color: #9a9a9a; white-space: pre; }
    .hud { position: absolute; left: 1373px; top: 17px; display: flex; align-items: center; gap: 11px; height: 22px; font-size: 13px; color: #fff; text-shadow: 0 0 2px #000; }
    .hud b { font-weight: 700; }
    .hud small { font-size: 10px; font-weight: 700; margin-left: 2px; }
    .hud i { width: 1px; height: 21px; background: #aaa; margin: 0 5px 6px 2px; }
  `];
  render() {
    return html`
      <header class="top">
        ${icon("blender", "logo")}
        <div class="menus">${["File", "Edit", "Render", "Window", "Help"].map((m) => html`<button class="menu">${m}</button>`)}</div>
        <div class="tabs">
          ${WORKSPACES.map((w, i) => html`<button class=${i ? "" : "sel"}>${w}</button>`)}
          <button class="add" aria-label="Add workspace">${icon("plus", "s")}</button>
        </div>
        <div class="ids">
          <div class="group">
            <button class="wide" aria-label="Browse scene">${icon("scene")}${icon("chevD", "s")}</button>
            <input class="name scene" aria-label="Scene name" value="Scene" />
            <button class="pinned" aria-label="Pin scene">${icon("pinOutline")}</button>
            <button class="cell on" aria-label="New scene">${icon("copy")}</button>
            <button class="off" aria-label="Delete scene">${icon("close", "s")}</button>
          </div>
          <div class="group">
            <button class="wide" aria-label="Browse view layer">${icon("viewlayer")}${icon("chevD", "s")}</button>
            <input class="name layer" aria-label="View layer name" value="ViewLayer" />
            <button class="cell on" aria-label="New view layer">${icon("copy")}</button>
            <button class="off" aria-label="Remove view layer">${icon("close", "s")}</button>
          </div>
        </div>
      </header>

      <main class="work">
        <div class="col">
          <section class="editor uv">
            <div class="uvhead">
              <div class="l">
                ${drop("uvedit", "Editor type")}
                <button class="box sync" aria-label="Sync selection">${icon("sync")}</button>
                <div class="group">
                  ${["vert", "edge", "face", "island"].map((k, i) => html`<button class="cell ${k === "face" ? "blue" : "on"} ${i ? "sep" : ""}" aria-label=${k}>${icon(k)}</button>`)}
                </div>
                ${drop("sticky", "Sticky selection")}
                <div class="hm">${["View", "Select", "Image", "UV"].map((m) => html`<button class="menu">${m}</button>`)}</div>
              </div>
              <div class="m">
                ${drop("pivot", "Pivot")}
                <div class="group">
                  <button class="cell on" aria-label="Snap">${icon("magnet")}</button>
                  <button class="wide" aria-label="Snap options">${icon("increment")}${icon("chevD", "s")}</button>
                </div>
                <div class="group">
                  <button class="cell on" aria-label="Proportional editing">${icon("prop")}</button>
                  <button class="wide faint" aria-label="Falloff">${icon("falloff")}${icon("chevD", "s")}</button>
                </div>
                <div class="group">
                  <button class="wide" aria-label="Browse image">${icon("image")}${icon("chevD", "s")}</button>
                  <button class="act on">${icon("plus", "s")}New</button>
                  <button class="act open on sep">${icon("folder")}Open</button>
                </div>
                <button aria-label="Pin">${icon("pin")}</button>
              </div>
              <div class="r">
                <div class="group">
                  <button class="cell blue" aria-label="Gizmos">${icon("gizmo")}</button>
                  <button class="cell" aria-label="Gizmo options">${icon("chevD", "s")}</button>
                </div>
                <div class="group">
                  <button class="cell blue" aria-label="Overlays">${icon("overlay")}</button>
                  <button class="cell" aria-label="Overlay options">${icon("chevD", "s")}</button>
                </div>
                <select class="box map" aria-label="Active UV map"><option>UVMap</option></select>
              </div>
            </div>
            <uv-canvas></uv-canvas>
            <div class="nav">
              <button aria-label="Zoom">${icon("zoom")}</button>
              <button aria-label="Pan">${icon("hand")}</button>
            </div>
            <span class="tog a">${icon("chevR", "s")}</span>
            <span class="tog b">${icon("chevL", "s")}</span>
          </section>
          <time-line class="editor"></time-line>
        </div>
        <div class="col">
          <scene-outliner class="editor"></scene-outliner>
          <material-properties class="editor"></material-properties>
        </div>
      </main>

      <footer class="status">Bucket | Verts:2,616/2,616 | Edges:5,050/5,050 | Faces:2,490/2,490 | Tris:4,908 | Objects:1/1 | Duration: 00:10+10 (Frame 56/250) | Memory: 601.6 MiB | VRAM: 0.8/4.0 GiB | 4.4.3</footer>

      <div class="hud"><span>GPU</span><span><b>1</b><small>%</small></span><i></i><span>CPU</span><span><b>8</b><small>%</small></span></div>
    `;
  }
}
